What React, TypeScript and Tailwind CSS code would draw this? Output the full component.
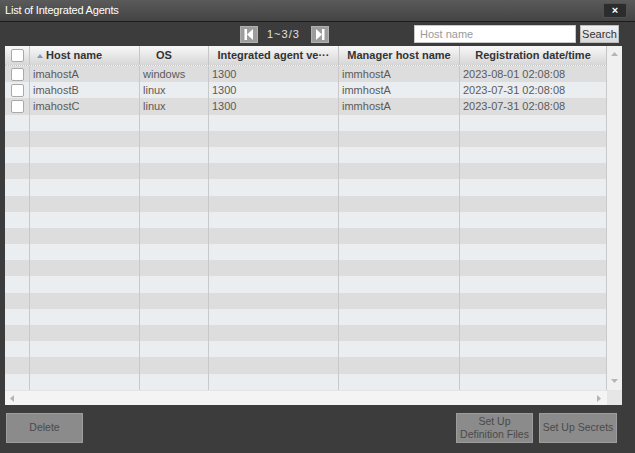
import React from 'react';

const font = { fontFamily: '"Liberation Sans", Arial, sans-serif' };

type Agent = { host: string; os: string; version: string; manager: string; date: string };

const agents: Agent[] = [
  { host: 'imahostA', os: 'windows', version: '1300', manager: 'immhostA', date: '2023-08-01 02:08:08' },
  { host: 'imahostB', os: 'linux', version: '1300', manager: 'immhostA', date: '2023-07-31 02:08:08' },
  { host: 'imahostC', os: 'linux', version: '1300', manager: 'immhostA', date: '2023-07-31 02:08:08' },
];

const ROWS = 20;

const Checkbox: React.FC = () => (
  <div className="w-[13px] h-[13px] bg-white border border-[#a9a9a9] rounded-[2px]" />
);

const Arrow: React.FC<{ dir: 'up' | 'down' | 'left' | 'right' }> = ({ dir }) => {
  const pts = {
    up: '0,5 3.5,1 7,5',
    down: '0,1 3.5,5 7,1',
    left: '5,0 1,3.5 5,7',
    right: '1,0 5,3.5 1,7',
  }[dir];
  return (
    <svg width="7" height="7" viewBox="0 0 7 7">
      <polygon points={pts} fill="#b4b4b4" />
    </svg>
  );
};

const PageButton: React.FC<{ last?: boolean }> = ({ last }) => (
  <div className="w-[18px] h-[17px] bg-[#9d9d9d] border border-[#b0b0b0] flex items-center justify-center">
    <svg width="10" height="11" viewBox="0 0 10 11">
      {last ? (
        <>
          <polygon points="1,0 7,5.5 1,11" fill="white" />
          <rect x="7" y="0" width="2.5" height="11" fill="white" />
        </>
      ) : (
        <>
          <rect x="0.5" y="0" width="2.5" height="11" fill="white" />
          <polygon points="9,0 3,5.5 9,11" fill="white" />
        </>
      )}
    </svg>
  </div>
);

const cols = [
  { w: 'w-[25px]', label: '' },
  { w: 'w-[110px]', label: 'Host name' },
  { w: 'w-[69px]', label: 'OS' },
  { w: 'w-[130px]', label: 'Integrated agent ve···' },
  { w: 'w-[121px]', label: 'Manager host name' },
  { w: 'w-[147px]', label: 'Registration date/time' },
];

export default function App() {
  return (
    <div className="w-[635px] h-[453px] bg-[#3c3c3c] flex flex-col overflow-hidden" style={font}>
      {/* title bar */}
      <div className="h-[22px] bg-gradient-to-b from-[#5a5a5a] to-[#444444] border-b border-[#1c1c1c] flex items-center justify-between pl-[5px] pr-[8px] shrink-0">
        <span className="text-white text-[11px] leading-none tracking-[-0.2px]">List of Integrated Agents</span>
        <div className="w-[24px] h-[15px] bg-[#2c2c2c] border border-[#505050] rounded-[2px] flex items-center justify-center text-white text-[11px] font-bold leading-none">
          ×
        </div>
      </div>

      {/* toolbar */}
      <div className="h-[24px] flex items-start pt-[3px] shrink-0">
        <div className="flex items-center ml-[240px] h-[18px]">
          <PageButton />
          <span className="text-[#e0e0e0] text-[11px] ml-[9px] mr-[11px] tracking-[1px]">1~3/3</span>
          <PageButton last />
        </div>
        <div className="ml-auto mr-[16px] flex items-center gap-[4px]">
          <div className="w-[162px] h-[18px] bg-white border border-[#c9c9c9] flex items-center px-[5px] text-[11px] text-[#9a9a9a]">
            Host name
          </div>
          <div className="w-[39px] h-[18px] bg-gradient-to-b from-[#f2f2f2] to-[#d9d9d9] border border-[#bdbdbd] flex items-center justify-center text-[11px] text-[#333]">
            Search
          </div>
        </div>
      </div>

      {/* table */}
      <div className="ml-[5px] w-[617px] h-[359px] bg-[#f0f0f0] flex flex-col shrink-0">
        <div className="flex flex-1 min-h-0">
          <div className="w-[602px] flex flex-col overflow-hidden">
            <div className="h-[20px] flex shrink-0 bg-gradient-to-b from-[#f8f8f8] to-[#d6d6d6] border-b border-dotted border-[#c4c4c4]">
              {cols.map((c, i) => (
                <div
                  key={i}
                  className={`${c.w} h-full border-r border-[#c6c6c6] flex items-center text-[11px] font-bold text-[#333] whitespace-nowrap overflow-hidden ${
                    i === 1 ? 'justify-start pl-[7px]' : i === 2 ? 'justify-center pr-[20px]' : 'justify-center'
                  }`}
                >
                  {i === 0 ? (
                    <Checkbox />
                  ) : i === 1 ? (
                    <span className="flex items-center gap-[3px]">
                      <svg width="6" height="4" viewBox="0 0 6 4">
                        <polygon points="0,4 3,0 6,4" fill="#7c9ac0" />
                      </svg>
                      {c.label}
                    </span>
                  ) : (
                    c.label
                  )}
                </div>
              ))}
            </div>
            {Array.from({ length: ROWS }).map((_, r) => {
              const a = agents[r];
              const vals = a ? ['', a.host, a.os, a.version, a.manager, a.date] : ['', '', '', '', '', ''];
              return (
                <div key={r} className={`h-[16.2px] flex shrink-0 ${r % 2 === 0 ? 'bg-[#dddddd]' : 'bg-[#ebeef1]'}`}>
                  {cols.map((c, i) => (
                    <div
                      key={i}
                      className={`${c.w} h-full border-r border-[#c9c9c9] flex items-center text-[11px] text-[#5a5a5a] whitespace-nowrap overflow-hidden ${
                        i === 0 ? 'justify-center' : 'pl-[3px]'
                      }`}
                    >
                      {i === 0 ? a ? <Checkbox /> : null : vals[i]}
                    </div>
                  ))}
                </div>
              );
            })}
          </div>
          <div className="w-[15px] bg-[#f0f0f0] flex flex-col items-center justify-between py-[5px]">
            <Arrow dir="up" />
            <Arrow dir="down" />
          </div>
        </div>
        <div className="h-[15px] flex shrink-0 border-t border-[#e4e4e4]">
          <div className="w-[602px] bg-[#f4f4f4] flex items-center justify-between px-[4px]">
            <Arrow dir="left" />
            <Arrow dir="right" />
          </div>
          <div className="w-[15px] bg-[#e6e6e6]" />
        </div>
      </div>

      {/* footer buttons */}
      <div className="flex mt-[8px] px-[6px] pr-[18px]">
        <div className="w-[77px] h-[30px] bg-[#8b8b8b] border border-[#9d9d9d] flex items-center justify-center text-[10.5px] text-[#4a4a4a]">
          Delete
        </div>
        <div className="ml-auto flex gap-[6px]">
          <div className="w-[77px] h-[30px] bg-[#8b8b8b] border border-[#9d9d9d] flex flex-col items-center justify-center text-[10.5px] text-[#4a4a4a] leading-[13px] text-center">
            <span>Set Up</span>
            <span>Definition Files</span>
          </div>
          <div className="w-[78px] h-[30px] bg-[#8b8b8b] border border-[#9d9d9d] flex items-center justify-center text-[10.5px] text-[#4a4a4a]">
            Set Up Secrets
          </div>
        </div>
      </div>
    </div>
  );
}
